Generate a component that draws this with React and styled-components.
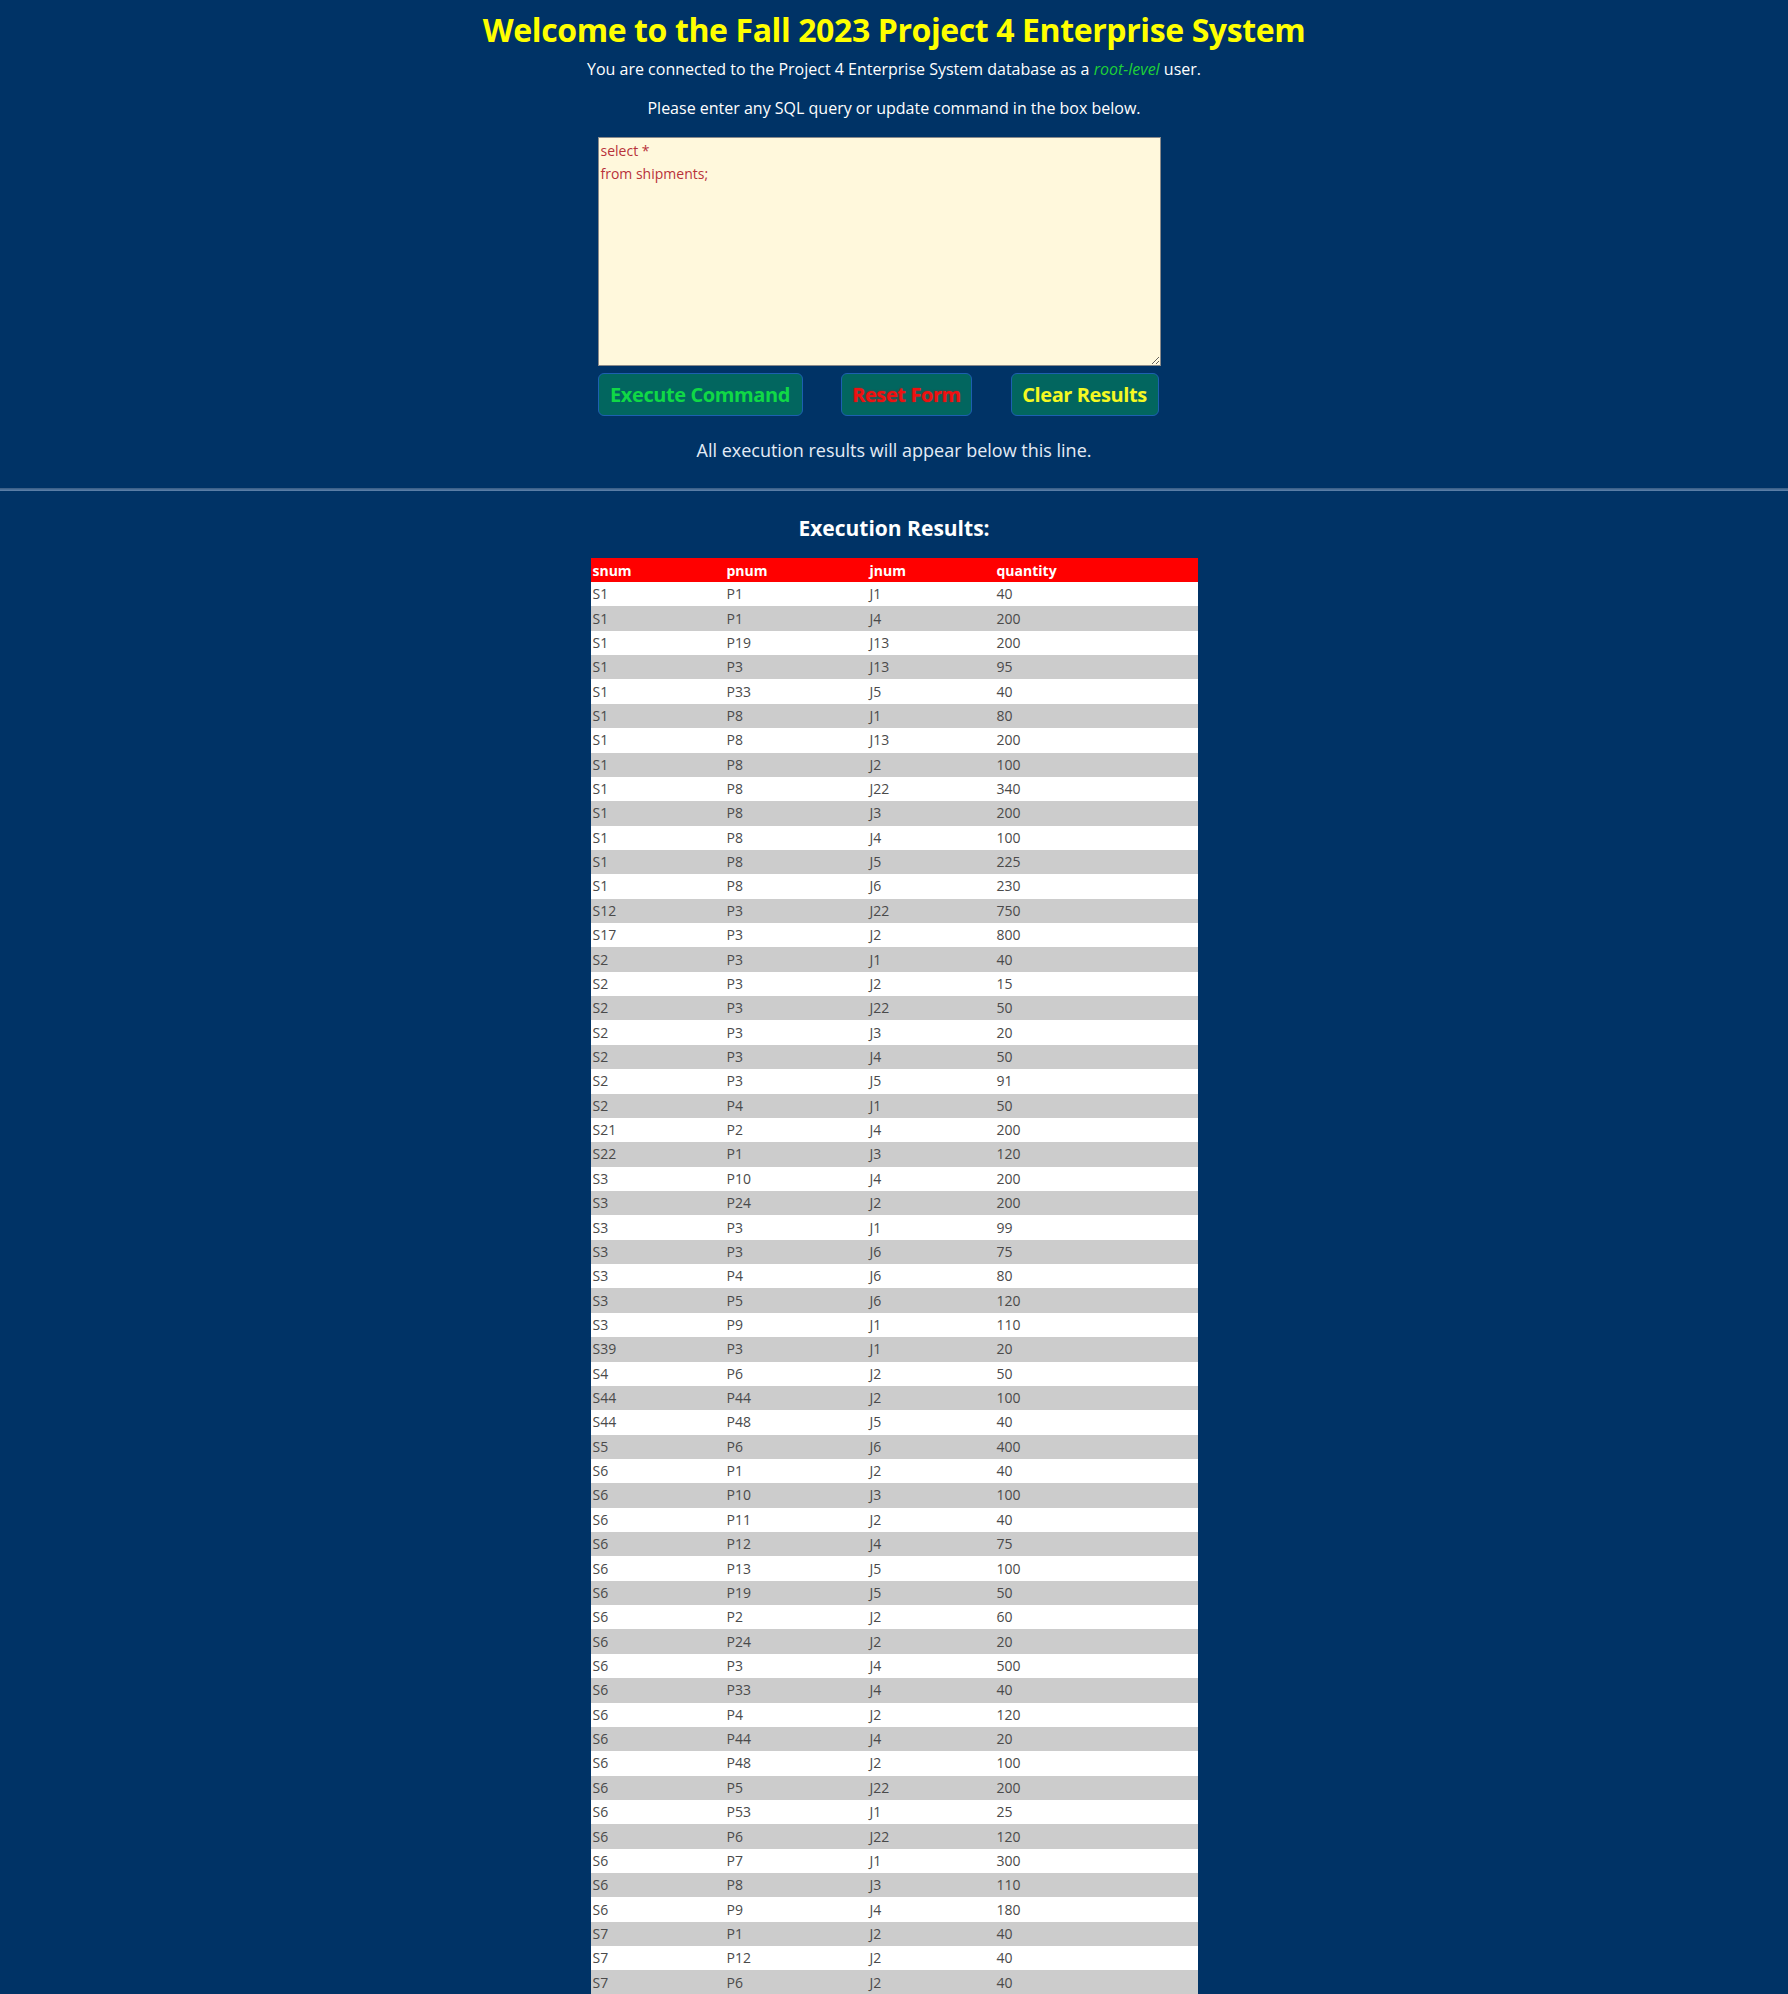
import React from "react";
import styled, { createGlobalStyle } from "styled-components";

const GlobalStyle = createGlobalStyle`
  html, body {
    margin: 0;
    padding: 0;
    background: #003366;
  }
  body {
    font-family: "Open Sans", "Noto Sans", sans-serif;
    color: #ffffff;
  }
`;

const rows = [
  ["S1", "P1", "J1", "40"],
  ["S1", "P1", "J4", "200"],
  ["S1", "P19", "J13", "200"],
  ["S1", "P3", "J13", "95"],
  ["S1", "P33", "J5", "40"],
  ["S1", "P8", "J1", "80"],
  ["S1", "P8", "J13", "200"],
  ["S1", "P8", "J2", "100"],
  ["S1", "P8", "J22", "340"],
  ["S1", "P8", "J3", "200"],
  ["S1", "P8", "J4", "100"],
  ["S1", "P8", "J5", "225"],
  ["S1", "P8", "J6", "230"],
  ["S12", "P3", "J22", "750"],
  ["S17", "P3", "J2", "800"],
  ["S2", "P3", "J1", "40"],
  ["S2", "P3", "J2", "15"],
  ["S2", "P3", "J22", "50"],
  ["S2", "P3", "J3", "20"],
  ["S2", "P3", "J4", "50"],
  ["S2", "P3", "J5", "91"],
  ["S2", "P4", "J1", "50"],
  ["S21", "P2", "J4", "200"],
  ["S22", "P1", "J3", "120"],
  ["S3", "P10", "J4", "200"],
  ["S3", "P24", "J2", "200"],
  ["S3", "P3", "J1", "99"],
  ["S3", "P3", "J6", "75"],
  ["S3", "P4", "J6", "80"],
  ["S3", "P5", "J6", "120"],
  ["S3", "P9", "J1", "110"],
  ["S39", "P3", "J1", "20"],
  ["S4", "P6", "J2", "50"],
  ["S44", "P44", "J2", "100"],
  ["S44", "P48", "J5", "40"],
  ["S5", "P6", "J6", "400"],
  ["S6", "P1", "J2", "40"],
  ["S6", "P10", "J3", "100"],
  ["S6", "P11", "J2", "40"],
  ["S6", "P12", "J4", "75"],
  ["S6", "P13", "J5", "100"],
  ["S6", "P19", "J5", "50"],
  ["S6", "P2", "J2", "60"],
  ["S6", "P24", "J2", "20"],
  ["S6", "P3", "J4", "500"],
  ["S6", "P33", "J4", "40"],
  ["S6", "P4", "J2", "120"],
  ["S6", "P44", "J4", "20"],
  ["S6", "P48", "J2", "100"],
  ["S6", "P5", "J22", "200"],
  ["S6", "P53", "J1", "25"],
  ["S6", "P6", "J22", "120"],
  ["S6", "P7", "J1", "300"],
  ["S6", "P8", "J3", "110"],
  ["S6", "P9", "J4", "180"],
  ["S7", "P1", "J2", "40"],
  ["S7", "P12", "J2", "40"],
  ["S7", "P6", "J2", "40"],
];

const columns = [
  { name: "snum", width: 134 },
  { name: "pnum", width: 143 },
  { name: "jnum", width: 127 },
  { name: "quantity", width: 203 },
];

const Page = styled.div`
  display: flex;
  flex-direction: column;
  align-items: center;
  padding-top: 10px;
`;

const Header = styled.header`
  display: flex;
  flex-direction: column;
  align-items: center;
  width: 100%;
`;

const Title = styled.h1`
  margin: 0;
  font-family: "Open Sans", sans-serif;
  font-size: 32px;
  line-height: 40px;
  font-weight: 700;
  color: #ffff00;
  letter-spacing: -0.4px;
`;

const Lead = styled.p`
  margin: ${(p) => p.$top}px 0 0;
  font-size: 16px;
  line-height: 20px;
  color: #ffffff;
`;

const Role = styled.em`
  color: #1fd037;
  font-style: italic;
`;

const Form = styled.form`
  display: flex;
  flex-direction: column;
  align-items: center;
  margin: 19px 30px 0 0;
  width: 563px;
`;

const QueryBox = styled.textarea`
  box-sizing: border-box;
  width: 563px;
  height: 229px;
  margin: 0;
  padding: 1px 2px;
  background: #fff8dc;
  border: 1px solid #8a8a8a;
  color: #b8323a;
  font-family: "Open Sans", sans-serif;
  font-size: 14px;
  line-height: 23px;
  resize: both;
  outline: none;
`;

const ButtonRow = styled.div`
  display: flex;
  justify-content: space-between;
  width: 561px;
  margin-top: 7px;
  margin-right: 2px;
`;

const ActionButton = styled.button`
  box-sizing: border-box;
  height: 43px;
  width: ${(p) => p.$width}px;
  padding: 0;
  background: #02665f;
  border: 1px solid #1d5fb0;
  border-radius: 6px;
  color: ${(p) => p.$color};
  font-family: "Open Sans", sans-serif;
  font-weight: 700;
  font-size: 20px;
  letter-spacing: -0.4px;
  text-shadow: ${(p) => (p.$glow ? "0 0 2px rgba(255,0,0,0.6)" : "none")};
  cursor: pointer;
`;

const Notice = styled.p`
  margin: 22px 0 0;
  font-size: 18px;
  line-height: 24px;
  color: #e4ecf6;
`;

const Divider = styled.hr`
  width: 100%;
  box-sizing: border-box;
  margin: 26px 0 0;
  height: 3px;
  border: none;
  border-top: 1px solid #3d6189;
  border-bottom: 1px solid #5a7ea6;
  background: #4a6f98;
`;

const Results = styled.section`
  display: flex;
  flex-direction: column;
  align-items: center;
  margin-top: 22px;
`;

const ResultsTitle = styled.h2`
  margin: 0;
  font-size: 21px;
  line-height: 30px;
  font-weight: 700;
  color: #ffffff;
`;

const Table = styled.table`
  margin-top: 15px;
  border-collapse: collapse;
  table-layout: fixed;
  width: 607px;
  font-family: "Open Sans", sans-serif;
`;

const HeadCell = styled.th`
  height: 24px;
  padding: 0 2px;
  background: #ff0000;
  color: #ffffff;
  font-size: 14px;
  font-weight: 700;
  text-align: left;
`;

const Row = styled.tr`
  height: 24.37px;
  background: ${(p) => (p.$alt ? "#cccccc" : "#ffffff")};
`;

const Cell = styled.td`
  padding: 0 2px;
  color: #4a4a4a;
  font-size: 14px;
  line-height: 20px;
`;

export default function App() {
  return (
    <>
      <GlobalStyle />
      <Page>
        <Header>
          <Title>Welcome to the Fall 2023 Project 4 Enterprise System</Title>
          <Lead $top={9}>
            You are connected to the Project 4 Enterprise System database as a{" "}
            <Role>root-level</Role> user.
          </Lead>
          <Lead $top={19}>Please enter any SQL query or update command in the box below.</Lead>
          <Form onSubmit={(e) => e.preventDefault()}>
            <QueryBox defaultValue={"select *\nfrom shipments;"} spellCheck={false} />
            <ButtonRow>
              <ActionButton type="submit" $width={205} $color="#10d846">
                Execute Command
              </ActionButton>
              <ActionButton type="reset" $width={131} $color="#ee1111" $glow>
                Reset Form
              </ActionButton>
              <ActionButton type="button" $width={148} $color="#f4f822">
                Clear Results
              </ActionButton>
            </ButtonRow>
          </Form>
          <Notice>All execution results will appear below this line.</Notice>
        </Header>
        <Divider />
        <Results>
          <ResultsTitle>Execution Results:</ResultsTitle>
          <Table>
            <colgroup>
              {columns.map((c) => (
                <col key={c.name} style={{ width: c.width }} />
              ))}
            </colgroup>
            <thead>
              <tr>
                {columns.map((c) => (
                  <HeadCell key={c.name}>{c.name}</HeadCell>
                ))}
              </tr>
            </thead>
            <tbody>
              {rows.map((r, i) => (
                <Row key={i} $alt={i % 2 === 1}>
                  {r.map((v, j) => (
                    <Cell key={j}>{v}</Cell>
                  ))}
                </Row>
              ))}
            </tbody>
          </Table>
        </Results>
      </Page>
    </>
  );
}
